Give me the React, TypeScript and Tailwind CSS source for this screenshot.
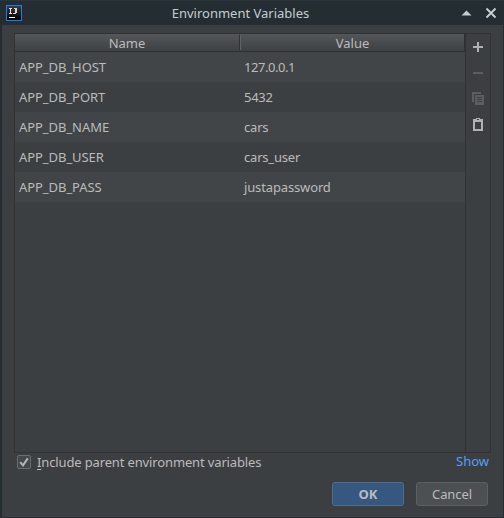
const rows = [
  { name: "APP_DB_HOST", value: "127.0.0.1", tracking: "tracking-[-0.45px]" },
  { name: "APP_DB_PORT", value: "5432", tracking: "tracking-[-0.3px]" },
  { name: "APP_DB_NAME", value: "cars", tracking: "tracking-[-0.2px]" },
  { name: "APP_DB_USER", value: "cars_user", tracking: "tracking-[-0.2px]" },
  { name: "APP_DB_PASS", value: "justapassword", tracking: "tracking-[-0.14px]" },
];

function AppIcon() {
  return (
    <svg width="16" height="16" viewBox="0 0 16 16" shapeRendering="crispEdges">
      <defs>
        <linearGradient id="face" x1="0" y1="0" x2="0" y2="1">
          <stop offset="0" stopColor="#3b3b3b" />
          <stop offset="1" stopColor="#000" />
        </linearGradient>
      </defs>
      <rect width="16" height="16" fill="#1b7bf2" />
      <rect x="1" y="1" width="14" height="14" fill="url(#face)" />
      <path d="M3 3h3v1h-1v4h1v1h-3v-1h1v-4h-1z" fill="#e4e4e4" />
      <path d="M8 3h3v5h-1v1h-3v-1h2v-4h-1z" fill="#d4d4d4" />
      <rect x="3" y="12" width="6" height="1" fill="#fff" />
    </svg>
  );
}

function TitleBar() {
  return (
    <header className="flex h-[25px] items-center border-t border-[#2b363b] bg-[#232d32] pl-1.5 pr-[7px]">
      <div className="w-11"><AppIcon /></div>
      <h1 className="flex-1 pr-[22px] text-center text-[13px] leading-[24px] text-[#c3cdd0]">Environment Variables</h1>
      <div className="flex w-11 items-center justify-end gap-[13px]">
        <svg width="11" height="6" viewBox="0 0 11 6"><path d="M0.5 5.5L5.5 0.5L10.5 5.5Z" fill="#c3cdd0" /></svg>
        <svg width="12" height="12" viewBox="0 0 12 12"><path d="M1.5 1.5l9 9M10.5 1.5l-9 9" stroke="#c3cdd0" strokeWidth="2" /></svg>
      </div>
    </header>
  );
}

function Toolbar() {
  return (
    <div className="flex w-[26px] flex-col items-center border-x border-[#323232] pt-[5px]">
      <svg width="16" height="104" viewBox="0 0 16 104" shapeRendering="crispEdges">
        <path d="M3 7h4V3h2v4h4v2H9v4H7V9H3z" fill="#afb1b3" />
        <path d="M3 33h10v2H3z" fill="#5b5d5f" />
        <path d="M2 53h9v2H4v8H2z" fill="#5b5d5f" />
        <path fillRule="evenodd" d="M5 56h9v10H5zM7 58v1h5v-1zM7 60v1h5v-1zM7 62v1h5v-1z" fill="#5b5d5f" />
        <path fillRule="evenodd" d="M3 80h3v-1h4v1h3v12H3zM5 83v7h6v-7zM7 80v1h2v-1z" fill="#afb1b3" />
      </svg>
    </div>
  );
}

export default function App() {
  return (
    <div className="flex h-[518px] w-[504px] flex-col overflow-hidden bg-[#232d32] pb-px font-['Noto_Sans',sans-serif] text-[13px] text-[#bbbbbb]">
      <TitleBar />
      <main className="ml-0.5 mr-px flex flex-1 flex-col bg-[#3c3f41] pl-3 pr-3 pt-2">
        <section className="flex h-[420px] w-[477px] border-y border-l border-[#323232]">
          <div className="w-[450px]">
            <div className="flex h-[18px] border-b border-r border-[#2d2f30] bg-linear-to-b from-[#53575a] to-[#3e4143] text-center leading-[18px]">
              <div className="w-56">Name</div>
              <div className="my-px w-0.5 border-l border-r border-l-[#303234] border-r-[#606466]" />
              <div className="flex-1">Value</div>
            </div>
            {rows.map(({ name, value, tracking }) => (
              <div key={name} className="flex h-[30px] items-center leading-[30px] odd:bg-[#3c3f41] even:bg-[#414547]">
                <span className="w-[225px] pl-1 tracking-[-0.06px]">{name}</span>
                <span className={`pl-1 ${tracking}`}>{value}</span>
              </div>
            ))}
          </div>
          <Toolbar />
        </section>
        <div className="flex h-[18px] items-center justify-between pl-[3px]">
          <label className="flex items-center gap-1.5">
            <svg width="14" height="14" viewBox="0 0 14 14">
              <rect x="0.5" y="0.5" width="13" height="13" rx="1.5" fill="#43494a" stroke="#6b6b6b" />
              <path d="M3.2 7.2l2.8 3.2L10.8 3.4" fill="none" stroke="#b4b6b6" strokeWidth="2" />
            </svg>
            <span className="leading-[18px] tracking-[-0.14px]"><span className="underline underline-offset-2">I</span>nclude parent environment variables</span>
          </label>
          <a className="relative -top-px pr-0.5 leading-[16px] text-[#589df6]">Show</a>
        </div>
        <footer className="mt-[11px] flex justify-end gap-3 pr-[3px]">
          <button className="h-6 w-[72px] rounded-[3px] border border-[#4c708c] bg-[#365880] font-bold leading-[22px]">OK</button>
          <button className="h-6 w-[72px] rounded-[3px] border border-[#5e6060] bg-[#4c5052] leading-[22px] tracking-[-0.1px]">Cancel</button>
        </footer>
      </main>
    </div>
  );
}
